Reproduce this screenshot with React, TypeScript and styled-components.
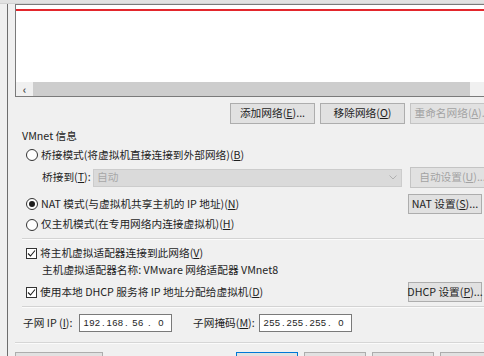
import React from "react";
import styled, { createGlobalStyle } from "styled-components";

const GlobalStyle = createGlobalStyle`
  html, body { margin: 0; padding: 0; background: #f0f0f0; }
  body {
    width: 484px; height: 356px; overflow: hidden;
    font-family: "Noto Sans CJK SC", "Noto Sans", sans-serif;
  }
`;

const Root = styled.div`
  width: 484px;
  height: 356px;
  overflow: hidden;
  background: #f0f0f0;
  display: flex;
  flex-direction: column;
  font-size: 10.7px;
  color: #1e1e1e;
  line-height: 1;
`;

const TopStrip = styled.div`
  height: 3px;
  flex-shrink: 0;
  background: #e2e2e2;
  border-bottom: 1px solid #d2d2d2;
`;

const Frame = styled.div`
  flex: 1;
  margin-left: 7px;
  border-left: 1px solid #6e6e6e;
  padding-left: 7px;
  display: flex;
  flex-direction: column;
  min-width: 0;
`;

const ListView = styled.div`
  height: 93px;
  box-sizing: border-box;
  flex-shrink: 0;
  border: 1px solid #7a7a7a;
  border-right: none;
  background: #ffffff;
  display: flex;
  flex-direction: column;
`;

const RedLine = styled.div`
  margin-top: 4px;
  height: 2px;
  background: #e3262c;
`;

const Spacer = styled.div`
  flex: 1;
`;

const HScroll = styled.div`
  height: 14px;
  display: flex;
  background: #f0f0f0;
`;

const ScrollArrow = styled.div`
  width: 17px;
  display: flex;
  align-items: center;
  justify-content: center;
  color: #505050;
  font-size: 11px;
  font-weight: bold;
`;

const ScrollThumb = styled.div`
  width: 437px;
  background: #cdcdcd;
`;

const ButtonRow = styled.div`
  margin-top: 6px;
  height: 21px;
  flex-shrink: 0;
  display: flex;
  gap: 5px;
  padding-left: 215px;
`;

const Button = styled.div<{ $w: number; $disabled?: boolean; $default?: boolean }>`
  width: ${(p) => p.$w}px;
  flex-shrink: 0;
  box-sizing: border-box;
  height: 21px;
  display: flex;
  align-items: center;
  justify-content: center;
  background: #e1e1e1;
  border: 1px solid ${(p) => (p.$default ? "#0078d7" : p.$disabled ? "#c4c4c4" : "#adadad")};
  color: ${(p) => (p.$disabled ? "#a3a3a3" : "#1e1e1e")};
  white-space: nowrap;
`;

const U = styled.span`
  text-decoration: underline;
`;

const Section = styled.div`
  padding-left: 7px;
  display: flex;
  flex-direction: column;
`;

const TitleRow = styled.div`
  margin-top: 3px;
  height: 18px;
  display: flex;
  align-items: center;
`;

const OptionRow = styled.div<{ $h: number; $mt: number }>`
  margin-top: ${(p) => p.$mt}px;
  height: ${(p) => p.$h}px;
  display: flex;
  align-items: center;
  padding-left: 4px;
  white-space: nowrap;
`;

const Radio = styled.span<{ $checked?: boolean }>`
  width: 12px;
  height: 12px;
  box-sizing: border-box;
  border-radius: 50%;
  border: 1px solid #333333;
  background: #ffffff;
  display: flex;
  align-items: center;
  justify-content: center;
  margin-right: 3px;
  flex-shrink: 0;
  &::after {
    content: "";
    display: ${(p) => (p.$checked ? "block" : "none")};
    width: 6px;
    height: 6px;
    border-radius: 50%;
    background: #1e1e1e;
  }
`;

const Check = styled.span`
  width: 11px;
  height: 11px;
  box-sizing: border-box;
  border: 1px solid #333333;
  background: #ffffff;
  display: flex;
  align-items: center;
  justify-content: center;
  margin-right: 3px;
  flex-shrink: 0;
`;

const SideButton = styled(Button)`
  margin-left: auto;
  margin-right: 2px;
  height: 20px;
`;

const BridgeRow = styled.div`
  margin-top: 3px;
  height: 21px;
  display: flex;
  align-items: center;
  padding-left: 20px;
  white-space: nowrap;
`;

const Label = styled.span<{ $w: number }>`
  width: ${(p) => p.$w}px;
  flex-shrink: 0;
  white-space: nowrap;
`;

const Combo = styled.div`
  width: 309px;
  height: 18px;
  box-sizing: border-box;
  flex-shrink: 0;
  background: #dadada;
  border: 1px solid #cccccc;
  display: flex;
  align-items: center;
  padding-left: 3px;
  color: #a8a8a8;
  margin-right: 8px;
`;

const ComboArrow = styled.span`
  margin-left: auto;
  margin-right: 4px;
  display: flex;
`;

const Separator = styled.div<{ $mt: number }>`
  margin-top: ${(p) => p.$mt}px;
  height: 1px;
  background: #d3d3d3;
  border-bottom: 1px solid #fbfbfb;
`;

const Indented = styled.div`
  height: 16px;
  display: flex;
  align-items: center;
  padding-left: 20px;
  white-space: nowrap;
`;

const SubnetRow = styled.div`
  margin-top: 6px;
  height: 18px;
  display: flex;
  align-items: center;
  padding-left: 1px;
  white-space: nowrap;
`;

const IpBox = styled.div`
  width: 93px;
  height: 18px;
  box-sizing: border-box;
  flex-shrink: 0;
  border: 1px solid #7a7a7a;
  background: #ffffff;
  display: flex;
  align-items: center;
  padding-left: 2px;
  font-family: "Liberation Sans", "Noto Sans", sans-serif;
  font-size: 9.5px;
  letter-spacing: 0.4px;
`;

const Octet = styled.span`
  width: 20px;
  text-align: center;
`;

const Dot = styled.span`
  width: 3px;
  text-align: center;
`;

const MaskLabel = styled(Label)`
  margin-left: 21px;
`;

const BottomSeparator = styled.div`
  margin-top: 10px;
  height: 1px;
  background: #d6d6d6;
  border-bottom: 1px solid #fbfbfb;
`;

const BottomRow = styled.div`
  margin-top: 8px;
  height: 21px;
  display: flex;
  gap: 6px;
`;

const BottomGap = styled.div`
  width: 121px;
  flex-shrink: 0;
`;

function Ip({ parts }: { parts: string[] }) {
  return (
    <IpBox>
      {parts.map((p, i) => (
        <React.Fragment key={i}>
          <Octet>{p}</Octet>
          {i < 3 && <Dot>.</Dot>}
        </React.Fragment>
      ))}
    </IpBox>
  );
}

const CheckMark = () => (
  <svg width="9" height="9" viewBox="0 0 9 9">
    <path d="M1 4.5 L3.5 7 L8 1.5" fill="none" stroke="#1e1e1e" strokeWidth="1.1" />
  </svg>
);

export default function App() {
  return (
    <>
      <GlobalStyle />
      <Root>
        <TopStrip />
        <Frame>
          <ListView>
            <RedLine />
            <Spacer />
            <HScroll>
              <ScrollArrow>‹</ScrollArrow>
              <ScrollThumb />
            </HScroll>
          </ListView>
          <ButtonRow>
            <Button $w={85}>添加网络(<U>E</U>)...</Button>
            <Button $w={85}>移除网络(<U>O</U>)</Button>
            <Button $w={85} $disabled>重命名网络(<U>A</U>)...</Button>
          </ButtonRow>
          <Section>
            <TitleRow>VMnet 信息</TitleRow>
            <OptionRow $h={18} $mt={1}>
              <Radio />
              桥接模式(将虚拟机直接连接到外部网络)(<U>B</U>)
            </OptionRow>
            <BridgeRow>
              <Label $w={51}>桥接到(<U>T</U>):</Label>
              <Combo>
                自动
                <ComboArrow>
                  <svg width="8" height="5" viewBox="0 0 8 5">
                    <path d="M0.5 0.5 L4 4 L7.5 0.5" fill="none" stroke="#b0b0b0" strokeWidth="1" />
                  </svg>
                </ComboArrow>
              </Combo>
              <Button $w={85} $disabled>自动设置(<U>U</U>)...</Button>
            </BridgeRow>
            <OptionRow $h={20} $mt={6}>
              <Radio $checked />
              NAT 模式(与虚拟机共享主机的 IP 地址)(<U>N</U>)
              <SideButton $w={74}>NAT 设置(<U>S</U>)...</SideButton>
            </OptionRow>
            <OptionRow $h={19} $mt={1}>
              <Radio />
              仅主机模式(在专用网络内连接虚拟机)(<U>H</U>)
            </OptionRow>
            <Separator $mt={4} />
            <OptionRow $h={18} $mt={4}>
              <Check>
                <CheckMark />
              </Check>
              将主机虚拟适配器连接到此网络(<U>V</U>)
            </OptionRow>
            <Indented>主机虚拟适配器名称: VMware 网络适配器 VMnet8</Indented>
            <OptionRow $h={20} $mt={4}>
              <Check>
                <CheckMark />
              </Check>
              使用本地 DHCP 服务将 IP 地址分配给虚拟机(<U>D</U>)
              <SideButton $w={74}>DHCP 设置(<U>P</U>)...</SideButton>
            </OptionRow>
            <Separator $mt={4} />
            <SubnetRow>
              <Label $w={56}>子网 IP (<U>I</U>):</Label>
              <Ip parts={["192", "168", "56", "0"]} />
              <MaskLabel $w={66}>子网掩码(<U>M</U>):</MaskLabel>
              <Ip parts={["255", "255", "255", "0"]} />
            </SubnetRow>
          </Section>
          <BottomSeparator />
          <BottomRow>
            <Button $w={88} />
            <BottomGap />
            <Button $w={62} $default />
            <Button $w={62} />
            <Button $w={62} />
            <Button $w={62} />
          </BottomRow>
        </Frame>
      </Root>
    </>
  );
}
